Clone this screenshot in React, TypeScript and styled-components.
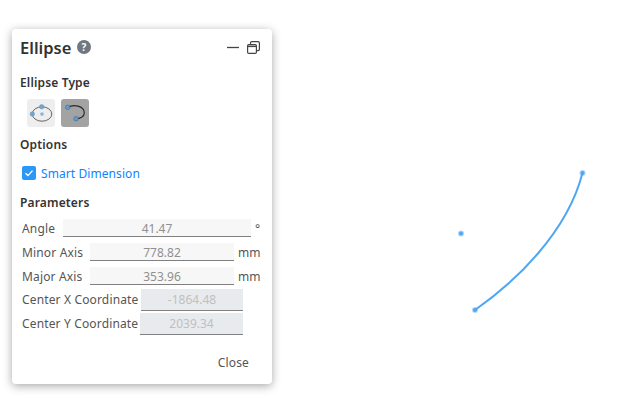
import React from 'react'
import styled, { createGlobalStyle } from 'styled-components'

const GlobalStyle = createGlobalStyle`
    html, body {
        margin: 0;
        padding: 0;
        background: #fff;
    }
    body {
        font-family: 'Noto Sans', 'Open Sans', 'Liberation Sans', sans-serif;
    }
`

const Page = styled.div`
    width: 624px;
    height: 403px;
    padding: 29px 0 0 12px;
    box-sizing: border-box;
    position: relative;
    overflow: hidden;
`

const Panel = styled.section`
    width: 260px;
    height: 355px;
    box-sizing: border-box;
    padding: 0 10px 0 8px;
    border-radius: 4px;
    background: #fff;
    box-shadow: 0 2px 10px rgba(0, 0, 0, 0.35);
    display: flex;
    flex-direction: column;
    letter-spacing: 0.15px;

    > * {
        flex-shrink: 0;
    }
`

const Header = styled.header`
    height: 36px;
    display: flex;
    align-items: center;
    gap: 6px;
`

const Title = styled.h1`
    margin: 0;
    font-size: 16.5px;
    font-weight: 600;
    letter-spacing: 0;
    color: #333;
`

const HeaderActions = styled.div`
    margin-left: auto;
    display: flex;
    align-items: center;
    gap: 8px;
    margin-right: 2px;
`

const SectionTitle = styled.h2<{ $top: number }>`
    margin: ${(p) => p.$top}px 0 0;
    font-size: 12px;
    line-height: 18px;
    font-weight: 600;
    color: #333;
`

const TypeButtons = styled.div`
    display: flex;
    gap: 6px;
    padding: 7px 0 0 7px;
`

const TypeButton = styled.button<{ $active?: boolean }>`
    width: 28px;
    height: 28px;
    padding: 0;
    border: 0;
    border-radius: 3px;
    background: ${(p) => (p.$active ? '#a3a3a3' : '#eeeeee')};
    display: flex;
    align-items: center;
    justify-content: center;
`

const CheckRow = styled.label`
    display: flex;
    align-items: center;
    gap: 5px;
    height: 18px;
    padding-left: 2px;
    margin-top: 10px;
    font-size: 12px;
    letter-spacing: 0.08px;
    color: #0a84ff;
`

const CheckBox = styled.span`
    width: 14px;
    height: 14px;
    border-radius: 2px;
    background: #2b97f7;
    display: flex;
    align-items: center;
    justify-content: center;
`

const Rows = styled.div`
    display: flex;
    flex-direction: column;
    padding: 7px 0 0 2px;
`

const Row = styled.div<{ $gap: number; $lower?: boolean }>`
    display: flex;
    align-items: center;
    margin-bottom: ${(p) => p.$gap}px;
    font-size: 12px;
    color: #555;

    > span {
        line-height: 16px;
        padding-top: ${(p) => (p.$lower ? 2 : 0)}px;
    }
`

const RowLabel = styled.span<{ $width: number }>`
    width: ${(p) => p.$width}px;
    flex: none;
    white-space: nowrap;
`

const ValueBox = styled.div<{ $width: number; $disabled?: boolean }>`
    width: ${(p) => p.$width}px;
    height: ${(p) => (p.$disabled ? 22 : 18)}px;
    flex: none;
    box-sizing: border-box;
    border-bottom: 1px solid #808080;
    background: ${(p) => (p.$disabled ? '#e8ebed' : '#f7f7f7')};
    color: ${(p) => (p.$disabled ? '#c0c0c0' : '#909090')};
    text-align: center;
    letter-spacing: 0;
    line-height: ${(p) => (p.$disabled ? 21 : 19)}px;
`

const Unit = styled.span`
    margin-left: 4px;
    white-space: nowrap;
`

const Footer = styled.footer`
    margin-top: auto;
    height: 44px;
    display: flex;
    justify-content: flex-end;
    align-items: center;
    padding: 1px 13px 0 0;
    box-sizing: border-box;
    font-size: 12px;
    color: #555;
`

const Sketch = styled.svg`
    position: absolute;
    left: 440px;
    top: 160px;
`

const HelpIcon = () => (
    <svg width="14" height="14" viewBox="0 0 14 14">
        <circle cx="7" cy="7" r="7" fill="#6f7780" />
        <text x="7" y="10.6" textAnchor="middle" fontSize="10" fontWeight="700" fill="#fff" fontFamily="'Noto Sans', sans-serif">
            ?
        </text>
    </svg>
)

const MinimizeIcon = () => (
    <svg width="12" height="12" viewBox="0 0 12 12">
        <path d="M0 6.5h12" stroke="#444" strokeWidth="1.3" />
    </svg>
)

const RestoreIcon = () => (
    <svg width="13" height="13" viewBox="0 0 13 13" fill="none" stroke="#444" strokeWidth="1.2">
        <rect x="0.6" y="3.6" width="8.8" height="8.8" rx="1.2" />
        <path d="M3.5 3.4V2a1.4 1.4 0 0 1 1.4-1.4h6.1A1.4 1.4 0 0 1 12.4 2v6.2a1.4 1.4 0 0 1-1.4 1.4H9.6" />
        <path d="M1 5.4h8" strokeWidth="1.4" />
    </svg>
)

const FullEllipseIcon = () => (
    <svg width="28" height="28" viewBox="0 0 28 28">
        <ellipse cx="15" cy="15" rx="9.8" ry="7.2" fill="none" stroke="#666" strokeWidth="1" />
        <circle cx="14.7" cy="7.8" r="2.3" fill="#6ea6d8" stroke="#6b8aa6" strokeWidth="0.4" />
        <circle cx="5.300" cy="15" r="2.3" fill="#6ea6d8" stroke="#6b8aa6" strokeWidth="0.4" />
        <circle cx="15" cy="15" r="1.6" fill="#8fb8dc" stroke="#7f98ad" strokeWidth="0.3" />
    </svg>
)

const ArcIcon = () => (
    <svg width="28" height="28" viewBox="0 0 28 28">
        <path d="M6.700 8.300C12 5.500 23.300 6 23.300 14C23.300 17.500 19 19.700 15 19.700" fill="none" stroke="#2a2a2a" strokeWidth="1.2" />
        <circle cx="6.700" cy="8.300" r="2.300" fill="#5f9bd0" stroke="#3d5f80" strokeWidth="0.5" />
        <circle cx="15" cy="19.700" r="2.300" fill="#5f9bd0" stroke="#3d5f80" strokeWidth="0.5" />
    </svg>
)

const SketchNode = ({ x, y }: { x: number; y: number }) => (
    <>
        <circle cx={x} cy={y} r="3" fill="#4fa6f2" opacity="0.45" />
        <circle cx={x} cy={y} r="2" fill="#4fa6f2" />
    </>
)

const App = () => {
    return (
        <Page>
            <GlobalStyle />
            <Panel>
                <Header>
                    <Title>Ellipse</Title>
                    <HelpIcon />
                    <HeaderActions>
                        <MinimizeIcon />
                        <RestoreIcon />
                    </HeaderActions>
                </Header>
                <SectionTitle $top={9}>Ellipse Type</SectionTitle>
                <TypeButtons>
                    <TypeButton>
                        <FullEllipseIcon />
                    </TypeButton>
                    <TypeButton $active>
                        <ArcIcon />
                    </TypeButton>
                </TypeButtons>
                <SectionTitle $top={9}>Options</SectionTitle>
                <CheckRow>
                    <CheckBox>
                        <svg width="10" height="10" viewBox="0 0 10 10">
                            <path d="M1.500 5.200l2.500 2.400 4.500-5" fill="none" stroke="#fff" strokeWidth="1.400" />
                        </svg>
                    </CheckBox>
                    Smart Dimension
                </CheckRow>
                <SectionTitle $top={12}>Parameters</SectionTitle>
                <Rows>
                    <Row $gap={6} $lower>
                        <RowLabel $width={41}>Angle</RowLabel>
                        <ValueBox $width={188}>41.47</ValueBox>
                        <Unit>°</Unit>
                    </Row>
                    <Row $gap={6} $lower>
                        <RowLabel $width={68}>Minor Axis</RowLabel>
                        <ValueBox $width={144}>778.82</ValueBox>
                        <Unit>mm</Unit>
                    </Row>
                    <Row $gap={4} $lower>
                        <RowLabel $width={68}>Major Axis</RowLabel>
                        <ValueBox $width={144}>353.96</ValueBox>
                        <Unit>mm</Unit>
                    </Row>
                    <Row $gap={2}>
                        <RowLabel $width={119}>Center X Coordinate</RowLabel>
                        <ValueBox $width={102} $disabled>
                            -1864.48
                        </ValueBox>
                    </Row>
                    <Row $gap={0}>
                        <RowLabel $width={118}>Center Y Coordinate</RowLabel>
                        <ValueBox $width={103} $disabled>
                            2039.34
                        </ValueBox>
                    </Row>
                </Rows>
                <Footer>Close</Footer>
            </Panel>
            <Sketch width="160" height="160" viewBox="0 0 160 160">
                <path d="M35 150C75 122 127 73 142.500 13" fill="none" stroke="#4fa6f2" strokeWidth="2" />
                <SketchNode x={142.5} y={13} />
                <SketchNode x={35} y={150} />
                <SketchNode x={21} y={73.5} />
            </Sketch>
        </Page>
    )
}

export default App
